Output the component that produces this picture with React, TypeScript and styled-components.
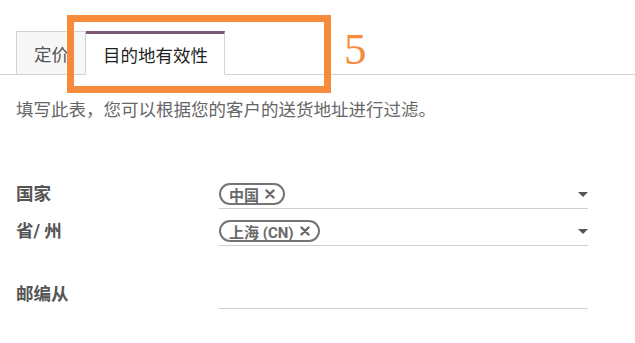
import React from "react"
import styled, { createGlobalStyle } from "styled-components"

const GlobalStyle = createGlobalStyle`
  body {
    margin: 0;
    background: #ffffff;
    font-family: Roboto, "Noto Sans CJK SC", "Noto Sans", sans-serif;
  }
`

const Page = styled.div`
  position: relative;
  width: 635px;
  height: 343px;
  overflow: hidden;
`

const TabBar = styled.div`
  display: flex;
  align-items: flex-end;
  margin-top: 32px;
  padding-left: 16px;
  height: 42px;
  border-bottom: 1px solid #ced4da;
`

const Tab = styled.div<{ active?: boolean }>`
  display: flex;
  align-items: center;
  height: ${(p) => (p.active ? "40px" : "42px")};
  margin-bottom: -1px;
  padding: 0 16px 0 17px;
  font-size: 17.5px;
  color: ${(p) => (p.active ? "#1f1f1f" : "#555")};
  background: ${(p) => (p.active ? "#ffffff" : "#f7f7f7")};
  border: 1px solid #ced4da;
  border-top: ${(p) => (p.active ? "3px solid #7e5877" : "1px solid #ced4da")};
  border-left: ${(p) => (p.active ? "none" : "1px solid #ced4da")};
  border-bottom: ${(p) => (p.active ? "1px solid #ffffff" : "1px solid #ced4da")};
`

const Description = styled.p`
  margin: 23px 0 0 16px;
  font-size: 17.5px;
  line-height: 24px;
  color: #666;
`

const Form = styled.div`
  margin-top: 50px;
  padding-left: 16px;
  display: flex;
  flex-direction: column;
`

const Row = styled.div<{ gap?: number }>`
  display: grid;
  grid-template-columns: 203px 369px;
  align-items: end;
  margin-top: ${(p) => p.gap ?? 0}px;
`

const Label = styled.div`
  font-size: 17.5px;
  line-height: 24px;
  font-weight: 700;
  color: #555;
  margin-bottom: 3px;
`

const Field = styled.div`
  display: flex;
  align-items: center;
  box-sizing: border-box;
  height: 37px;
  padding-top: 8px;
  border-bottom: 1px solid #cfcfcf;
`

const Tag = styled.span`
  display: inline-flex;
  align-items: center;
  gap: 6px;
  height: 22px;
  box-sizing: border-box;
  padding: 0 8px 0 8px;
  border: 2px solid #747474;
  border-radius: 11px;
  font-size: 15px;
  font-weight: 700;
  color: #686868;
`

const Remove = styled.svg`
  width: 10px;
  height: 10px;
  flex: none;
`

const Caret = styled.span`
  margin-left: auto;
  width: 0;
  height: 0;
  border-left: 5px solid transparent;
  border-right: 5px solid transparent;
  border-top: 5px solid #555;
`

const Highlight = styled.div`
  position: absolute;
  left: 67px;
  top: 15px;
  width: 264px;
  height: 78px;
  box-sizing: border-box;
  border: 7px solid #f58b3b;
`

const StepNumber = styled.div`
  position: absolute;
  left: 344px;
  top: 27px;
  font-family: "Liberation Serif", serif;
  font-size: 45px;
  line-height: 1;
  color: #f58b3b;
`

const RemoveIcon = () => (
  <Remove viewBox="0 0 10 10">
    <path
      d="M1.5 1.5 L8.5 8.5 M8.5 1.5 L1.5 8.5"
      stroke="#686868"
      strokeWidth="2.4"
      strokeLinecap="round"
    />
  </Remove>
)

export default function App() {
  return (
    <Page>
      <GlobalStyle />
      <TabBar>
        <Tab>定价</Tab>
        <Tab active>目的地有效性</Tab>
      </TabBar>
      <Description>填写此表，您可以根据您的客户的送货地址进行过滤。</Description>
      <Form>
        <Row>
          <Label>国家</Label>
          <Field>
            <Tag>
              中国
              <RemoveIcon />
            </Tag>
            <Caret />
          </Field>
        </Row>
        <Row>
          <Label>省/ 州</Label>
          <Field>
            <Tag>
              上海 (CN)
              <RemoveIcon />
            </Tag>
            <Caret />
          </Field>
        </Row>
        <Row gap={26}>
          <Label>邮编从</Label>
          <Field />
        </Row>
      </Form>
      <Highlight />
      <StepNumber>5</StepNumber>
    </Page>
  )
}
